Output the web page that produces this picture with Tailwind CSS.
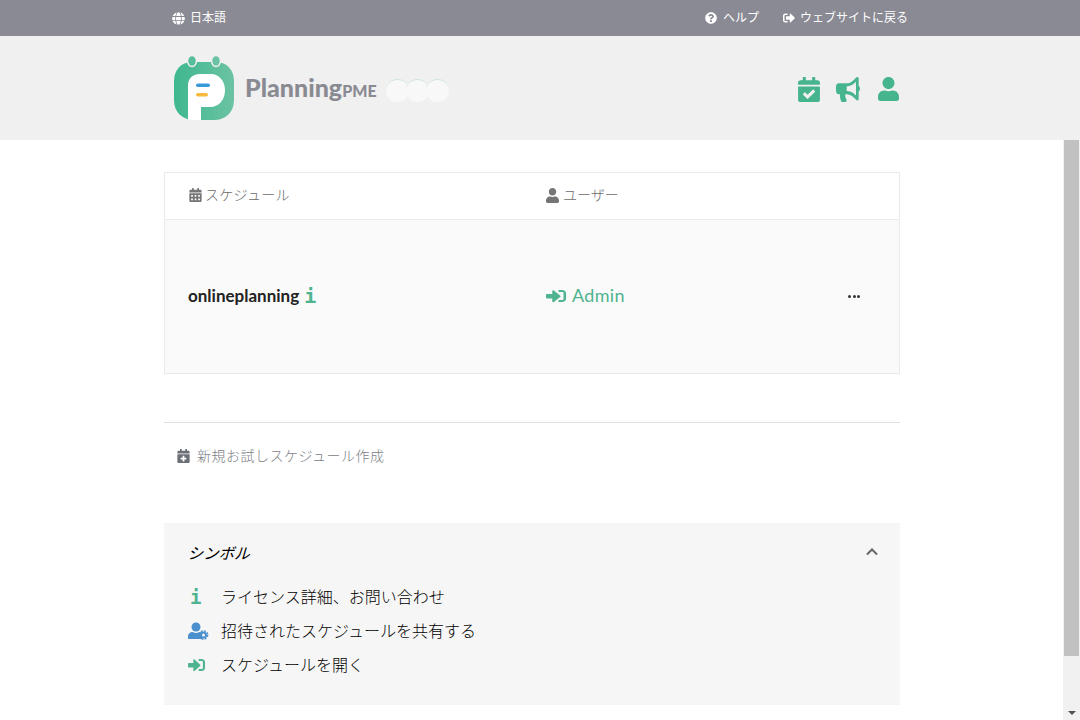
<!DOCTYPE html>
<html lang="ja">
<head>
<meta charset="utf-8">
<script src="https://cdn.jsdelivr.net/npm/@tailwindcss/browser@4"></script>
<title>PlanningPME</title>
</head>
<body class="font-['Lato','Noto_Sans_CJK_JP',sans-serif]">
<div class="flex h-[720px] w-[1080px] flex-col overflow-hidden bg-white">
  <div class="h-9 shrink-0 bg-[#8a8a94] text-xs text-white">
    <div class="ml-[172px] flex h-9 w-[736px] items-center justify-between">
      <div class="flex items-center gap-[5px]">
        <svg class="h-[13px] w-[13px]" viewBox="0 0 496 512" fill="currentColor"><path d="M336.5 160C322 70.7 287.8 8 248 8s-74 62.7-88.5 152h177zM152 256c0 22.2 1.2 43.5 3.3 64h185.3c2.1-20.5 3.3-41.8 3.3-64s-1.2-43.5-3.3-64H155.3c-2.1 20.5-3.3 41.8-3.3 64zm324.7-96c-28.6-67.9-86.5-120.4-158-141.6 24.4 33.8 41.2 84.7 50 141.6h108zM177.2 18.4C105.8 39.6 47.8 92.1 19.3 160h108c8.7-56.9 25.5-107.8 49.9-141.6zM487.4 192H372.7c2.1 21 3.3 42.5 3.3 64s-1.2 43-3.3 64h114.6c5.5-20.5 8.6-41.8 8.6-64s-3.1-43.5-8.5-64zM120 256c0-21.5 1.2-43 3.3-64H8.6C3.2 212.5 0 233.8 0 256s3.2 43.5 8.6 64h114.6c-2-21-3.2-42.5-3.2-64zm39.5 96c14.5 89.3 48.7 152 88.5 152s74-62.7 88.5-152h-177zm159.3 141.6c71.4-21.2 129.4-73.7 158-141.6h-108c-8.8 56.9-25.6 107.8-50 141.6zM19.3 352c28.6 67.9 86.5 120.4 158 141.6-24.4-33.8-41.2-84.7-50-141.6h-108z"/></svg>
        <span>日本語</span>
      </div>
      <div class="flex items-center gap-6">
        <div class="flex items-center gap-[6px]">
          <svg class="h-[12px] w-[12px]" viewBox="0 0 512 512" fill="currentColor"><path d="M504 256c0 136.997-111.043 248-248 248S8 392.997 8 256C8 119.083 119.043 8 256 8s248 111.083 248 248zM262.655 90c-54.497 0-89.255 22.957-116.549 63.758-3.536 5.286-2.353 12.415 2.715 16.258l34.699 26.31c5.205 3.947 12.621 3.008 16.665-2.122 17.864-22.658 30.113-35.797 57.303-35.797 20.429 0 45.698 13.148 45.698 32.958 0 14.976-12.363 22.667-32.534 33.976C247.128 238.528 216 254.941 216 296v4c0 6.627 5.373 12 12 12h56c6.627 0 12-5.373 12-12v-1.333c0-28.462 83.186-29.647 83.186-106.667 0-58.002-60.165-102-116.531-102zM256 338c-25.365 0-46 20.635-46 46 0 25.364 20.635 46 46 46s46-20.636 46-46c0-25.365-20.635-46-46-46z"/></svg>
          <span>ヘルプ</span>
        </div>
        <div class="flex items-center gap-[5px]">
          <svg class="h-[12px] w-[12px]" viewBox="0 0 512 512" fill="currentColor"><path d="M497 273L329 441c-15 15-41 4.5-41-17v-96H152c-13.3 0-24-10.7-24-24v-96c0-13.3 10.7-24 24-24h136V88c0-21.4 25.9-32 41-17l168 168c9.3 9.4 9.3 24.6 0 34zM192 436v-40c0-6.6-5.4-12-12-12H96c-17.7 0-32-14.3-32-32V160c0-17.7 14.3-32 32-32h84c6.6 0 12-5.4 12-12V76c0-6.6-5.4-12-12-12H96c-53 0-96 43-96 96v192c0 53 43 96 96 96h84c6.6 0 12-5.4 12-12z"/></svg>
          <span>ウェブサイトに戻る</span>
        </div>
      </div>
    </div>
  </div>

  <div class="h-[104px] shrink-0 bg-[#f0f0f0]">
    <div class="ml-[172px] flex h-[104px] w-[730px] items-center justify-between">
      <div class="flex items-center">
        <svg class="h-[68px] w-[64px]" viewBox="0 0 64 68">
          <defs><linearGradient id="lg" x1="0" y1="0" x2="1" y2="0"><stop offset="0" stop-color="#3fb78f"/><stop offset="1" stop-color="#6cc3a3"/></linearGradient></defs>
          <path d="M20 8 H44 C55 8 62 16 62 27 V46 C62 58 54 66 42 66 H22 C10 66 2 58 2 46 V27 C2 16 9 8 20 8 Z" fill="url(#lg)"/>
          <ellipse cx="20" cy="7" rx="4.500" ry="5.500" fill="#58bd99" stroke="#f0f0f0" stroke-width="1.500"/>
          <ellipse cx="44" cy="7" rx="4.500" ry="5.500" fill="#6cc3a3" stroke="#f0f0f0" stroke-width="1.500"/>
          <path d="M16 66 V32 C16 24 21 20 28 20 H39 C47 20 53 27 53 36 C53 46 47 53 38 53 H29 V66 Z" fill="#fff"/>
          <rect x="24" y="29.500" width="14" height="3.500" rx="1.700" fill="#3a9ad9"/>
          <rect x="24" y="39" width="12" height="3.500" rx="1.700" fill="#f7b93e"/>
        </svg>
        <div class="ml-[9px] mt-[-2px] flex items-baseline text-[#8a8a92]">
          <span class="text-[25px] leading-none font-black">Planning</span>
          <span class="text-[16px] leading-none font-black">PME</span>
        </div>
        <div class="mt-[4px] ml-[9px] flex">
          <div class="h-[23px] w-[20px]"><div class="h-[23px] w-[23px] rounded-full border-t border-[#cfe6dc] bg-[#f7f8f7]"></div></div>
          <div class="h-[23px] w-[20px]"><div class="h-[23px] w-[23px] rounded-full border-t border-[#cfe6dc] bg-[#f7f8f7]"></div></div>
          <div class="h-[23px] w-[20px]"><div class="h-[23px] w-[23px] rounded-full border-t border-[#cfe6dc] bg-[#f7f8f7]"></div></div>
        </div>
      </div>
      <div class="mr-[3px] mt-[2px] flex items-center text-[#46b48d]">
        <svg class="h-[25px] w-[22px]" viewBox="0 0 448 512" fill="currentColor"><path d="M436 160H12c-6.600 0-12-5.400-12-12v-36c0-26.500 21.500-48 48-48h48V12c0-6.600 5.400-12 12-12h40c6.600 0 12 5.400 12 12v52h128V12c0-6.600 5.400-12 12-12h40c6.600 0 12 5.400 12 12v52h48c26.500 0 48 21.500 48 48v36c0 6.600-5.400 12-12 12zM12 192h424c6.600 0 12 5.400 12 12v260c0 26.500-21.500 48-48 48H48c-26.500 0-48-21.500-48-48V204c0-6.600 5.400-12 12-12zm333.300 95.900l-28.200-28.400c-4.700-4.700-12.300-4.700-17-.1L194.100 364.600l-45.800-46.200c-4.700-4.700-12.300-4.700-17-.1l-28.400 28.200c-4.700 4.700-4.700 12.300-.1 17l82.600 83.200c4.700 4.700 12.300 4.700 17 .1l142.900-141.800c4.700-4.700 4.700-12.300 .1-17z"/></svg>
        <svg class="ml-4 h-[25px] w-[24px]" viewBox="0 0 576 512" preserveAspectRatio="none" fill="currentColor"><path d="M576 240c0-23.630-12.950-44.040-32-55.120V32.010C544 23.260 537.020 0 512 0c-7.120 0-14.190 2.380-19.980 7.020l-85.030 68.030C364.280 109.190 310.660 128 256 128H64c-35.350 0-64 28.650-64 64v96c0 35.350 28.650 64 64 64h33.700c-1.390 10.480-2.180 21.140-2.180 32 0 39.770 9.260 77.350 25.560 110.940 5.190 10.690 16.520 17.060 28.400 17.060h74.280c26.050 0 41.690-29.840 25.900-50.560-16.400-21.520-26.150-48.360-26.150-77.440 0-11.110 1.620-21.790 4.410-32H256c54.660 0 108.280 18.810 150.980 52.950l85.030 68.030a32.023 32.023 0 0 0 19.980 7.020c24.920 0 32-22.780 32-32V295.130C563.050 284.040 576 263.630 576 240zm-96 141.420l-33.050-26.440C392.950 311.780 325.120 288 256 288v-96c69.120 0 136.950-23.780 190.950-66.980L480 98.580v282.840z"/></svg>
        <svg class="ml-[18px] h-[24px] w-[21px]" viewBox="0 0 448 512" fill="currentColor"><path d="M224 256c70.700 0 128-57.300 128-128S294.700 0 224 0 96 57.300 96 128s57.300 128 128 128zm89.600 32h-16.700c-22.200 10.200-46.900 16-72.900 16s-50.600-5.800-72.900-16h-16.700C60.200 288 0 348.200 0 422.400V464c0 26.500 21.500 48 48 48h352c26.500 0 48-21.500 48-48v-41.600c0-74.200-60.200-134.400-134.400-134.400z"/></svg>
      </div>
    </div>
  </div>

  <div class="flex min-h-0 flex-1">
    <main class="min-w-0 flex-1 overflow-hidden pl-[164px] pt-8">
      <div class="w-[736px]">
        <div class="border border-[#e9e9e9]">
          <div class="grid h-[47px] grid-cols-[357px_1fr] items-center border-b border-[#ececec] pb-[2px] pl-6 text-sm font-light text-[#6a6a6a]">
            <div class="flex items-center gap-[3px]">
              <svg class="h-[14px] w-[13px]" viewBox="0 0 448 512" fill="#757575"><path d="M0 464c0 26.500 21.500 48 48 48h352c26.500 0 48-21.500 48-48V192H0v272zm320-196c0-6.600 5.400-12 12-12h40c6.600 0 12 5.400 12 12v40c0 6.600-5.400 12-12 12h-40c-6.600 0-12-5.400-12-12v-40zm0 128c0-6.600 5.400-12 12-12h40c6.600 0 12 5.400 12 12v40c0 6.600-5.400 12-12 12h-40c-6.600 0-12-5.400-12-12v-40zM192 268c0-6.600 5.400-12 12-12h40c6.600 0 12 5.400 12 12v40c0 6.600-5.400 12-12 12h-40c-6.600 0-12-5.400-12-12v-40zm0 128c0-6.600 5.400-12 12-12h40c6.600 0 12 5.400 12 12v40c0 6.600-5.400 12-12 12h-40c-6.600 0-12-5.400-12-12v-40zM64 268c0-6.600 5.400-12 12-12h40c6.600 0 12 5.400 12 12v40c0 6.600-5.400 12-12 12H76c-6.600 0-12-5.400-12-12v-40zm0 128c0-6.600 5.400-12 12-12h40c6.600 0 12 5.400 12 12v40c0 6.600-5.400 12-12 12H76c-6.600 0-12-5.400-12-12v-40zM400 64h-48V16c0-8.800-7.200-16-16-16h-32c-8.800 0-16 7.200-16 16v48H160V16c0-8.800-7.200-16-16-16h-32c-8.800 0-16 7.200-16 16v48H48C21.500 64 0 85.500 0 112v48h448v-48c0-26.500-21.500-48-48-48z"/></svg>
              <span class="tracking-[0.3px]">スケジュール</span>
            </div>
            <div class="flex items-center gap-[4px]">
              <svg class="h-[15px] w-[13px]" viewBox="0 0 448 512" fill="#757575"><path d="M224 256c70.700 0 128-57.300 128-128S294.700 0 224 0 96 57.300 96 128s57.300 128 128 128zm89.600 32h-16.700c-22.200 10.200-46.900 16-72.900 16s-50.600-5.800-72.900-16h-16.700C60.200 288 0 348.200 0 422.400V464c0 26.500 21.500 48 48 48h352c26.500 0 48-21.500 48-48v-41.600c0-74.200-60.200-134.400-134.400-134.400z"/></svg>
              <span>ユーザー</span>
            </div>
          </div>
          <div class="grid h-[153px] grid-cols-[357px_1fr_auto] items-center bg-[#fafafa] pb-[2px] pl-6 pr-[39px]">
            <div class="ml-[-1px] flex items-center gap-[5px]">
              <span class="text-[17px] font-bold text-[#222]">onlineplanning</span>
              <span class="font-['DejaVu_Sans_Mono',monospace] text-[20px] font-bold leading-none text-[#4fb38f]">i</span>
            </div>
            <div class="flex items-center gap-[6px] text-[#4fb38f]">
              <svg class="h-[16px] w-[20px]" viewBox="0 0 512 512" preserveAspectRatio="none" fill="currentColor"><path d="M416 448h-84c-6.600 0-12-5.400-12-12v-40c0-6.600 5.400-12 12-12h84c17.700 0 32-14.300 32-32V160c0-17.700-14.300-32-32-32h-84c-6.600 0-12-5.400-12-12V76c0-6.600 5.400-12 12-12h84c53 0 96 43 96 96v192c0 53-43 96-96 96zm-47-201L201 79c-15-15-41-4.500-41 17v96H24c-13.300 0-24 10.700-24 24v96c0 13.300 10.700 24 24 24h136v96c0 21.500 26 32 41 17l168-168c9.300-9.400 9.300-24.600 0-34z"/></svg>
              <span class="text-[18px] tracking-[0.3px]">Admin</span>
            </div>
            <div class="mt-[2px] flex gap-[1.500px]">
              <span class="h-[3px] w-[3px] rounded-full bg-[#333]"></span>
              <span class="h-[3px] w-[3px] rounded-full bg-[#333]"></span>
              <span class="h-[3px] w-[3px] rounded-full bg-[#333]"></span>
            </div>
          </div>
        </div>

        <div class="mt-12 flex h-[68px] items-center gap-[7px] border-t border-[#e2e2e2] pb-[2px] pl-[13px] text-sm font-light tracking-[0.5px] text-[#7d8087]">
          <svg class="h-[14px] w-[13px]" viewBox="0 0 448 512" fill="#6b6f76"><path d="M436 160H12c-6.600 0-12-5.400-12-12v-36c0-26.500 21.500-48 48-48h48V12c0-6.600 5.400-12 12-12h40c6.600 0 12 5.400 12 12v52h128V12c0-6.600 5.400-12 12-12h40c6.600 0 12 5.400 12 12v52h48c26.500 0 48 21.500 48 48v36c0 6.600-5.400 12-12 12zM12 192h424c6.600 0 12 5.400 12 12v260c0 26.500-21.500 48-48 48H48c-26.500 0-48-21.500-48-48V204c0-6.600 5.400-12 12-12zm316 140c0-6.600-5.400-12-12-12h-60v-60c0-6.600-5.400-12-12-12h-40c-6.600 0-12 5.400-12 12v60h-60c-6.600 0-12 5.400-12 12v40c0 6.600 5.400 12 12 12h60v60c0 6.600 5.400 12 12 12h40c6.600 0 12-5.400 12-12v-60h60c6.600 0 12-5.400 12-12v-40z"/></svg>
          <span>新規お試しスケジュール作成</span>
        </div>

        <section class="mt-[33px] h-[182px] bg-[#f6f6f6] pl-[24px] pr-[22px] pt-[20px]">
          <div class="flex h-[22px] items-center justify-between">
            <span class="ml-[1px] inline-block text-[15.500px] font-normal leading-none text-black [transform:skewX(-16deg)]">シンボル</span>
            <svg class="mb-[4px] h-[12px] w-[12px]" viewBox="0 0 12 12" fill="none" stroke="#666" stroke-width="2"><path d="M1 8.500 L6 3.500 L11 8.500"/></svg>
          </div>
          <ul class="mt-[15px] flex flex-col text-base font-light text-black">
            <li class="flex h-[34px] items-center">
              <span class="w-[33px] pl-[2px] font-['DejaVu_Sans_Mono',monospace] text-[19px] font-bold leading-none text-[#4fb38f]">i</span>
              <span>ライセンス詳細、お問い合わせ</span>
            </li>
            <li class="flex h-[34px] items-center">
              <svg class="h-[18px] w-[33px]" viewBox="1 0 33 18" fill="#4a8fce">
                <circle cx="9" cy="5" r="4.500"/>
                <path d="M1 17 V14.500 C1 11.500 3.500 10 5.500 10 C8 11.200 10 11.200 12.500 10 C13.500 10 14.500 10.500 15 11 V17 Z"/>
                <circle cx="16.500" cy="13" r="2.500" fill="none" stroke="#4a8fce" stroke-width="2"/>
                <circle cx="16.500" cy="13" r="4.200" fill="none" stroke="#4a8fce" stroke-width="1.400" stroke-dasharray="2 1.300"/>
              </svg>
              <span>招待されたスケジュールを共有する</span>
            </li>
            <li class="flex h-[34px] items-center">
              <div class="w-[33px]"><svg class="h-[16px] w-[17px]" viewBox="0 0 512 512" preserveAspectRatio="none" fill="#4fb38f"><path d="M416 448h-84c-6.600 0-12-5.400-12-12v-40c0-6.600 5.400-12 12-12h84c17.700 0 32-14.300 32-32V160c0-17.700-14.300-32-32-32h-84c-6.600 0-12-5.400-12-12V76c0-6.600 5.400-12 12-12h84c53 0 96 43 96 96v192c0 53-43 96-96 96zm-47-201L201 79c-15-15-41-4.500-41 17v96H24c-13.300 0-24 10.700-24 24v96c0 13.300 10.700 24 24 24h136v96c0 21.500 26 32 41 17l168-168c9.300-9.400 9.300-24.600 0-34z"/></svg></div>
              <span>スケジュールを開く</span>
            </li>
          </ul>
        </section>
      </div>
    </main>
    <div class="flex w-[17px] shrink-0 flex-col bg-[#f1f1f1]">
      <div class="mx-auto h-[516px] w-[15px] bg-[#c1c1c1]"></div>
      <div class="flex-1"></div>
      <div class="mx-auto mb-[5px] h-0 w-0 border-x-[4px] border-t-[4px] border-x-transparent border-t-[#505050]"></div>
    </div>
  </div>
</div>
</body>
</html>
